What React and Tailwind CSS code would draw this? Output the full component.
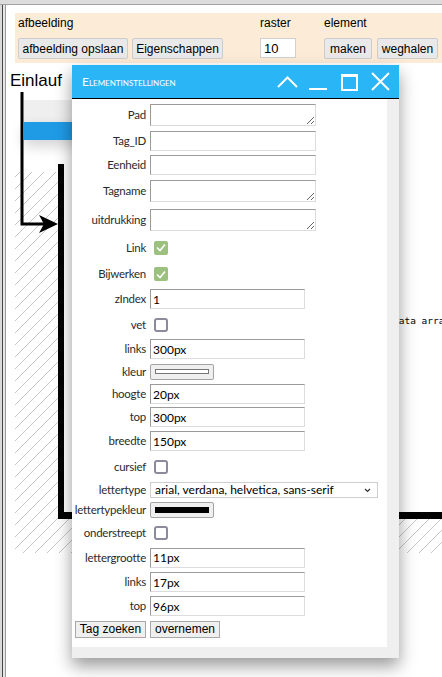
const fieldRows = [
  { label: "Pad", h: "h-[26px]", kind: "area" },
  { label: "Tag_ID", h: "h-[25px]", kind: "wide" },
  { label: "Eenheid", h: "h-[24px]", kind: "wide" },
  { label: "Tagname", h: "h-[28px]", kind: "area" },
  { label: "uitdrukking", h: "h-[29px]", kind: "area" },
  { label: "Link", h: "h-[27px]", kind: "on" },
  { label: "Bijwerken", h: "h-[26px]", kind: "on" },
  { label: "zIndex", h: "h-[24px]", kind: "text", value: "1" },
  { label: "vet", h: "h-[27px]", kind: "off" },
  { label: "links", h: "h-[22px]", kind: "text", value: "300px" },
  { label: "kleur", h: "h-[23px]", kind: "color", dark: false },
  { label: "hoogte", h: "h-[22px]", kind: "text", value: "20px" },
  { label: "top", h: "h-[24px]", kind: "text", value: "300px" },
  { label: "breedte", h: "h-[24px]", kind: "text", value: "150px" },
  { label: "cursief", h: "h-[28px]", kind: "off" },
  { label: "lettertype", h: "h-[18px]", kind: "select" },
  { label: "lettertypekleur", h: "h-[22px]", kind: "color", dark: true },
  { label: "onderstreept", h: "h-[24px]", kind: "off" },
  { label: "lettergrootte", h: "h-[25px]", kind: "text", value: "11px" },
  { label: "links", h: "h-[24px]", kind: "text", value: "17px" },
  { label: "top", h: "h-[24px]", kind: "text", value: "96px" },
];

const inputBorder =
  "border border-t-[#9a9a9a] border-l-[#9a9a9a] border-r-[#dcdcdc] border-b-[#dcdcdc] bg-white";

const Control = ({ row }) => {
  if (row.kind === "area") {
    return <textarea readOnly className={`${inputBorder} block w-[166px] h-[22px] outline-none`} />;
  }
  if (row.kind === "wide") {
    return <input readOnly className={`${inputBorder} w-[166px] h-[20px] outline-none`} />;
  }
  if (row.kind === "text") {
    return (
      <input
        readOnly
        value={row.value}
        className={`${inputBorder} w-[155px] h-[20px] pl-[2px] text-[12px] text-black outline-none`}
      />
    );
  }
  if (row.kind === "on") {
    return (
      <div className="ml-[4px] w-[14px] h-[14px] rounded-[2px] bg-[#9cc17f] flex items-center justify-center">
        <svg width="10" height="9" viewBox="0 0 10 9">
          <path d="M1 4.5 L4 7.5 L9 1.5" fill="none" stroke="white" strokeWidth="1.6" />
        </svg>
      </div>
    );
  }
  if (row.kind === "off") {
    return <div className="ml-[4px] w-[14px] h-[14px] rounded-[3px] border-2 border-[#8b8b9b] bg-white" />;
  }
  if (row.kind === "color") {
    return (
      <div className="w-[64px] h-[16px] bg-[#efefef] border border-[#a3a3a3] rounded-[2px] flex items-center pl-[4px]">
        {row.dark ? (
          <div className="w-[54px] h-[6px] bg-black" />
        ) : (
          <div className="w-[54px] h-[5px] bg-white border border-[#777]" />
        )}
      </div>
    );
  }
  return (
    <div className="w-[228px] h-[16px] border border-[#cfcfcf] bg-white flex items-center pl-[4px] pr-[6px] text-[12px] text-black">
      <span className="flex-1 leading-none">arial, verdana, helvetica, sans-serif</span>
      <svg width="7" height="5" viewBox="0 0 7 5">
        <path d="M1 1 L3.5 3.5 L6 1" fill="none" stroke="#333" strokeWidth="1.2" />
      </svg>
    </div>
  );
};

const ToolButton = ({ children, className }) => (
  <button className={`h-[21px] bg-[#e9e9e9] border border-[#cdcdcd] rounded-[2px] text-[12px] text-black ${className}`}>
    {children}
  </button>
);

const App = () => {
  return (
    <div className="relative w-[442px] h-[677px] overflow-hidden bg-white font-['Liberation_Sans',Arial,sans-serif] text-black">
      {/* window frame */}
      <div className="h-[5px] bg-[#dcdcdc] border-b border-[#a3a3a3]" />
      <div className="flex h-[672px]">
        <div className="flex w-[6px]">
          <div className="w-[2px] bg-[#dadada]" />
          <div className="w-[1px] bg-[#474747]" />
          <div className="w-[2px] bg-[#e6e6e6]" />
          <div className="w-[1px] bg-[#9a9a9a]" />
        </div>

        <div className="flex-1">
          {/* toolbar */}
          <div className="ml-[9px] mt-[8px] h-[50px] bg-[#fcebd7] pl-[3px] pt-[3px] grid grid-cols-[242px_64px_1fr] text-[12px]">
            <div className="flex flex-col">
              <p className="h-[14px] leading-[14px]">afbeelding</p>
              <div className="flex gap-[4px] mt-[8px]">
                <ToolButton className="w-[110px]">afbeelding opslaan</ToolButton>
                <ToolButton className="w-[91px]">Eigenschappen</ToolButton>
              </div>
            </div>
            <div className="flex flex-col">
              <p className="h-[14px] leading-[14px]">raster</p>
              <input
                readOnly
                value="10"
                className="mt-[8px] w-[36px] h-[20px] bg-white border border-[#d0d0d0] pl-[3px] text-[13px] outline-none"
              />
            </div>
            <div className="flex flex-col">
              <p className="h-[14px] leading-[14px]">element</p>
              <div className="flex gap-[5px] mt-[8px]">
                <ToolButton className="w-[48px]">maken</ToolButton>
                <ToolButton className="w-[61px]">weghalen</ToolButton>
              </div>
            </div>
          </div>
        </div>
      </div>

      {/* drawing canvas */}
      <div className="absolute left-[24px] top-[100px] w-[280px] h-[22px] bg-[#efefef]" />
      <div className="absolute left-[24px] top-[122px] w-[280px] h-[18px] bg-[#1f9be6] shadow-[0_6px_14px_rgba(0,0,0,0.18)]" />
      <svg className="absolute left-0 top-0" width="442" height="677" viewBox="0 0 442 677">
        <defs>
          <pattern id="hatch" patternUnits="userSpaceOnUse" width="12" height="12">
            <path d="M0 12 L12 0" stroke="#b9b9b9" strokeWidth="0.8" />
          </pattern>
        </defs>
        <rect x="15" y="172" width="43" height="381" fill="url(#hatch)" />
        <rect x="58" y="519" width="384" height="34" fill="url(#hatch)" />
        <path d="M22 92 V224 H45" fill="none" stroke="black" strokeWidth="3" />
        <polygon points="39,215 58,224 39,233 44,224" fill="black" />
        <rect x="58" y="164" width="6" height="355" fill="black" />
        <rect x="58" y="512" width="384" height="7" fill="black" />
      </svg>
      <p className="absolute left-[10px] top-[71px] text-[17px] leading-[20px]">Einlauf</p>
      <p className="absolute left-[393px] top-[315px] font-['DejaVu_Sans_Mono',monospace] text-[9.5px] leading-[12px] whitespace-nowrap">
        data array
      </p>

      {/* dialog window */}
      <div className="absolute left-[72px] top-[65px] w-[327px] h-[593px] flex flex-col bg-[#efefef] shadow-[0_8px_16px_rgba(0,0,0,0.4)]">
        <div className="h-[34px] bg-[#29b5f6] border-b border-black flex items-center pl-[10px] pr-[7px]">
          <span className="flex-1 font-['Lato',sans-serif] text-[12px] text-white [font-variant:small-caps]">
            Elementinstellingen
          </span>
          <svg width="117" height="20" viewBox="277 73 117 20">
            <polyline points="280,88 289.5,78.5 299,88" fill="none" stroke="white" strokeWidth="2" />
            <rect x="311" y="89" width="18" height="2" fill="white" />
            <rect x="344" y="76" width="15" height="15" fill="none" stroke="white" strokeWidth="2" />
            <rect x="343" y="75" width="17" height="3" fill="white" />
            <path d="M374 74 L391 91 M391 74 L374 91" stroke="white" strokeWidth="2" />
          </svg>
        </div>

        <div className="flex flex-1">
          <div className="flex-1 bg-white pt-[3px] pl-[3px] font-['Lato',sans-serif] text-[11.5px] tracking-[-0.25px] text-[#2b2b2b]">
            {fieldRows.map((row, i) => (
              <div key={i} className={`flex items-center ${row.h}`}>
                <div className="w-[71px] flex justify-end whitespace-nowrap">{row.label}</div>
                <div className="ml-[4px] flex items-center tracking-normal">
                  <Control row={row} />
                </div>
              </div>
            ))}
            <div className="flex items-center h-[22px] font-['Liberation_Sans',Arial,sans-serif] tracking-normal text-black">
              <button className="w-[71px] h-[17px] bg-[#efefef] border border-[#a8a8a8] text-[12px] leading-none">
                Tag zoeken
              </button>
              <button className="ml-[4px] w-[70px] h-[17px] bg-[#efefef] border border-[#a8a8a8] text-[12px] leading-none">
                overnemen
              </button>
            </div>
          </div>
          <div className="w-[12px]" />
        </div>
        <div className="h-[11px]" />
      </div>
    </div>
  );
};

export default App;
